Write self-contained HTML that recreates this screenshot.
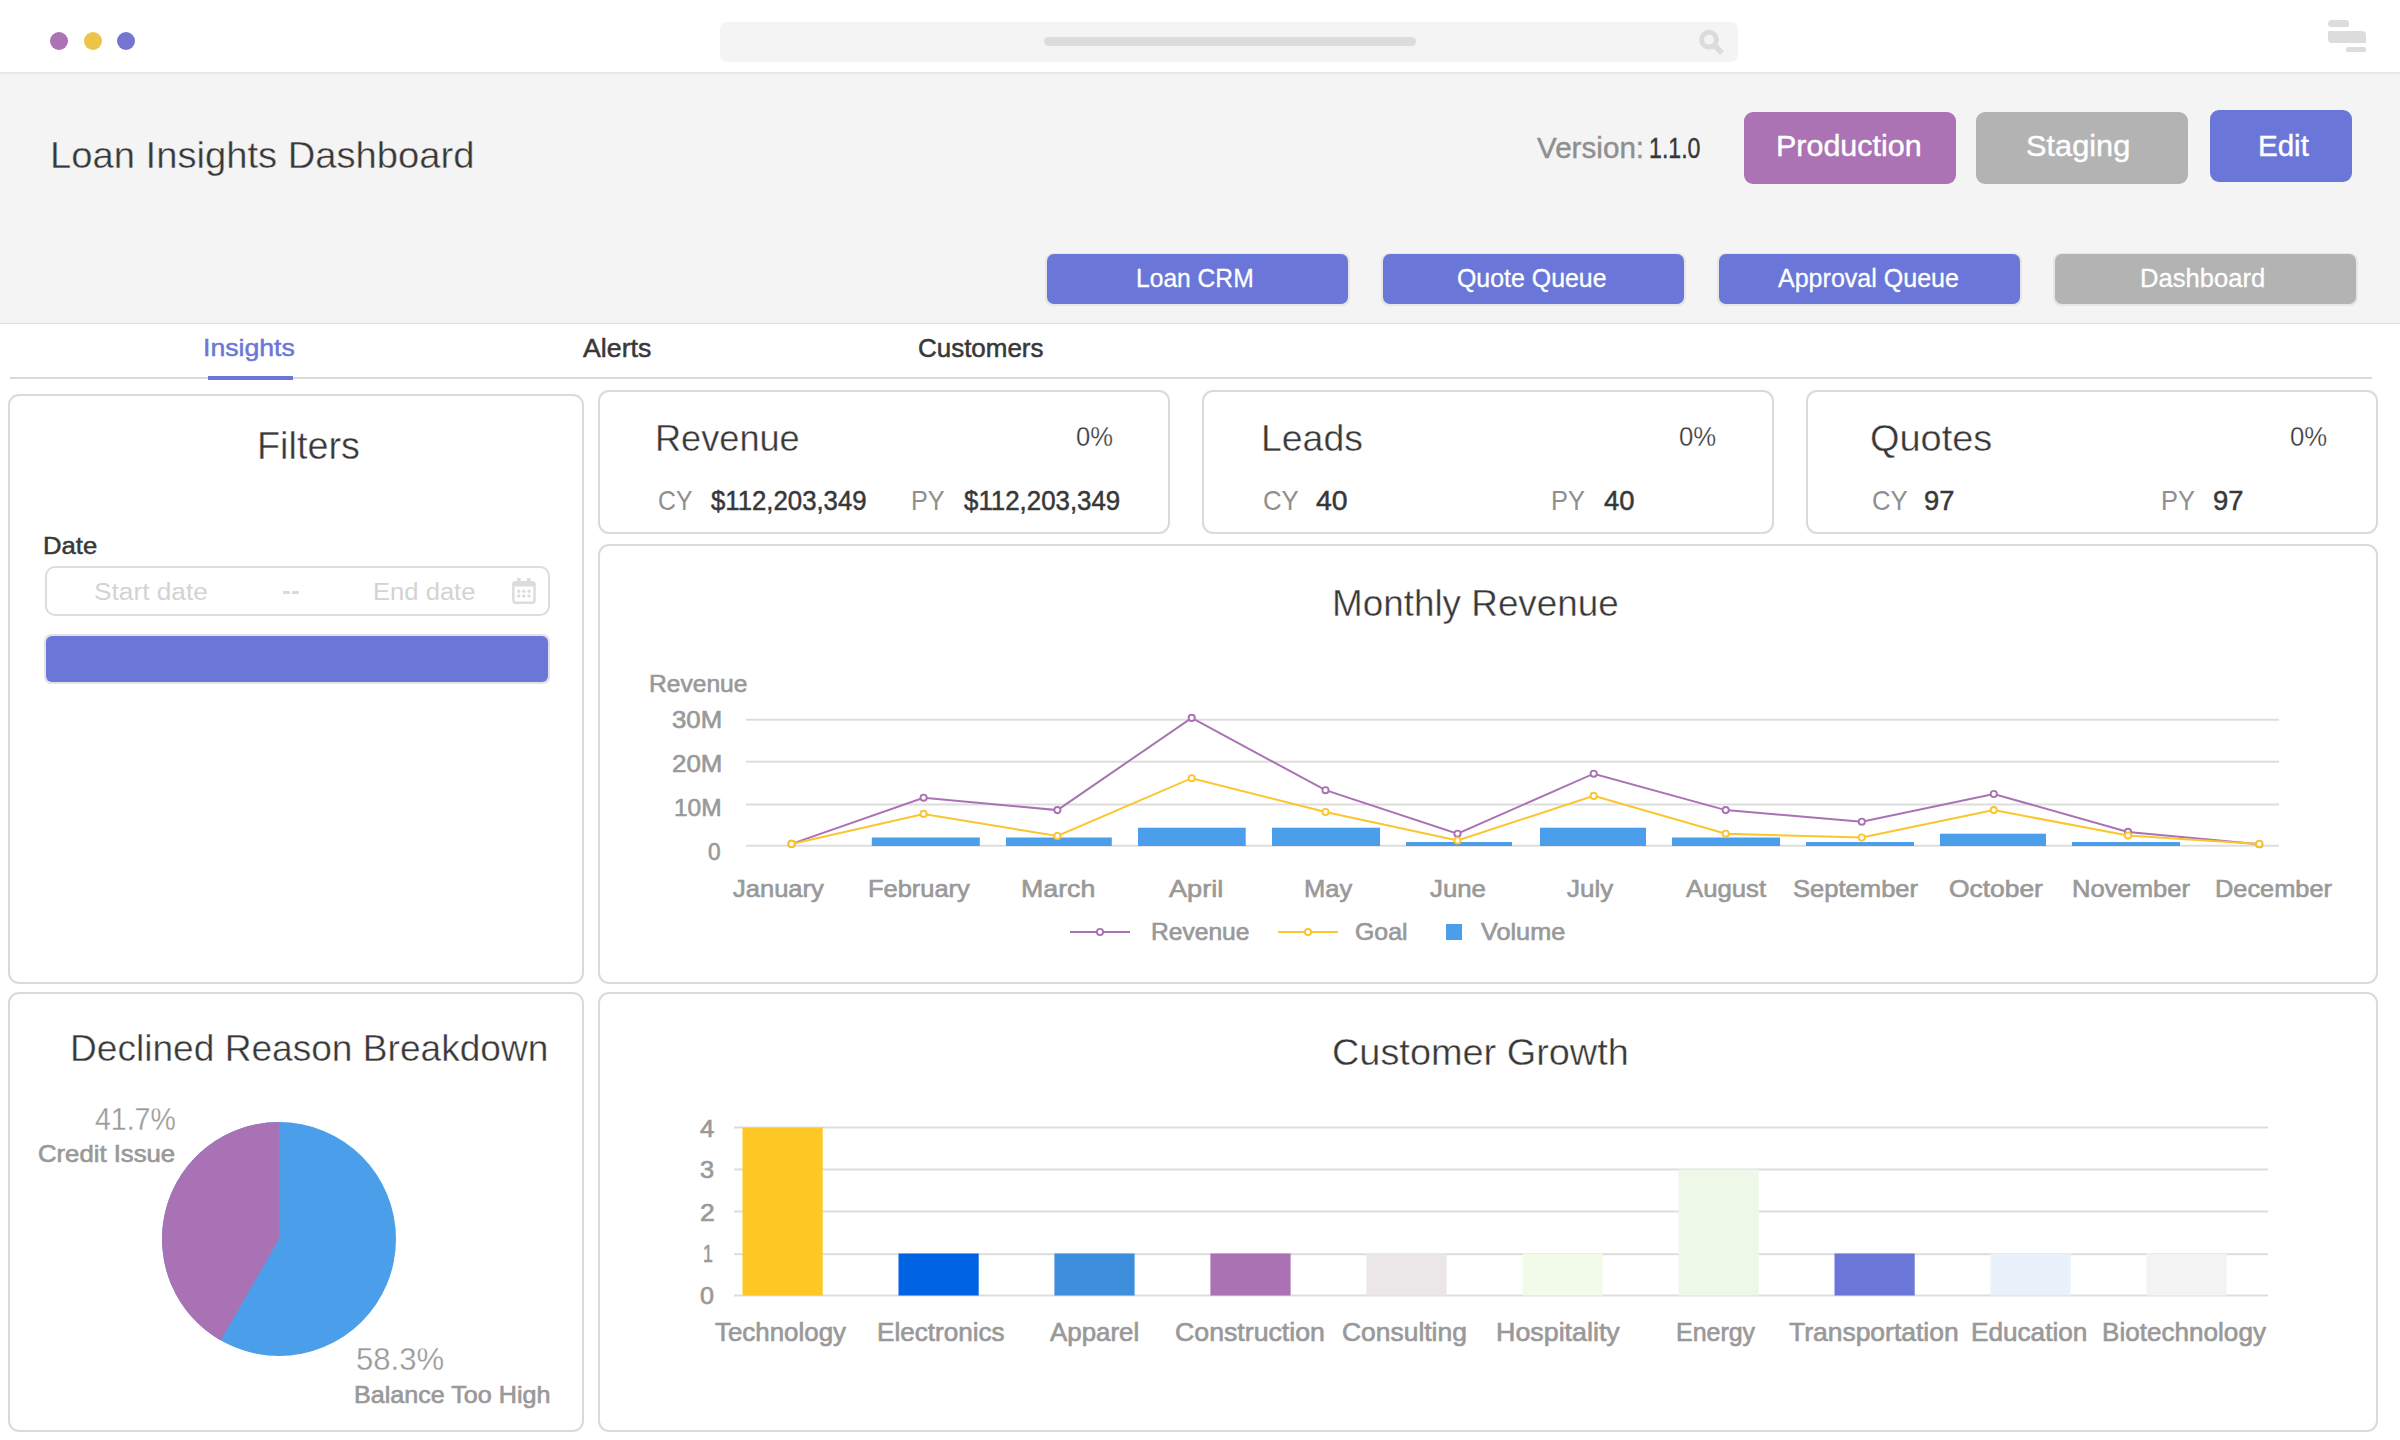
<!DOCTYPE html>
<html><head><meta charset="utf-8"><title>Loan Insights Dashboard</title>
<style>
html,body{margin:0;padding:0;}
body{width:2400px;height:1440px;position:relative;overflow:hidden;background:#fff;font-family:"Liberation Sans",sans-serif;}
.t{position:absolute;white-space:nowrap;line-height:1;transform-origin:0 0;}
</style></head><body>
<div style="position:absolute;left:0px;top:72px;width:2400px;height:2px;box-sizing:border-box;background:#e9e6e7"></div>
<div style="position:absolute;left:50px;top:32px;width:18px;height:18px;box-sizing:border-box;border-radius:50%;background:#ab72b4"></div>
<div style="position:absolute;left:83.5px;top:32px;width:18.0px;height:18px;box-sizing:border-box;border-radius:50%;background:#ecc548"></div>
<div style="position:absolute;left:117px;top:32px;width:18px;height:18px;box-sizing:border-box;border-radius:50%;background:#7576d2"></div>
<div style="position:absolute;left:720px;top:22px;width:1018px;height:40px;box-sizing:border-box;background:#f4f4f4;border-radius:7px"></div>
<div style="position:absolute;left:1044px;top:37px;width:372px;height:9px;box-sizing:border-box;background:#dcdcdc;border-radius:5px"></div>
<svg style="position:absolute;left:0;top:0" width="2400" height="80"><circle cx="1709" cy="39.7" r="7.4" fill="none" stroke="#dcdcdc" stroke-width="5"/><line x1="1714" y1="45" x2="1722" y2="53" stroke="#dcdcdc" stroke-width="5.5"/></svg>
<div style="position:absolute;left:2328px;top:20px;width:21px;height:7px;box-sizing:border-box;background:#dcdcdc;border-radius:3.5px 3.5px 2px 3.5px"></div>
<div style="position:absolute;left:2328px;top:31px;width:38px;height:12px;box-sizing:border-box;background:#dcdcdc;border-radius:1.5px 4px 1.5px 4px"></div>
<div style="position:absolute;left:2346px;top:47px;width:20px;height:5px;box-sizing:border-box;background:#dcdcdc;border-radius:3px"></div>
<div style="position:absolute;left:0px;top:74px;width:2400px;height:249px;box-sizing:border-box;background:#f4f4f4"></div>
<div style="position:absolute;left:0px;top:323px;width:2400px;height:1px;box-sizing:border-box;background:#dedede"></div>
<div class="t" style="left:49.62px;top:137.41px;font-size:37.79px;color:#383838;font-weight:400;transform:scaleX(1.0105);-webkit-text-stroke:0.4px #f4f4f4;paint-order:fill stroke;">Loan Insights Dashboard</div>
<div class="t" style="left:1537.47px;top:133.54px;font-size:28.78px;color:#8f8f8f;font-weight:400;transform:scaleX(1.0304);-webkit-text-stroke:0.4px #8f8f8f;">Version:</div>
<div class="t" style="left:1648.94px;top:133.54px;font-size:28.78px;color:#383838;font-weight:400;transform:scaleX(0.8049);-webkit-text-stroke:0.4px #383838;">1.1.0</div>
<div style="position:absolute;left:1744px;top:112px;width:212px;height:72px;box-sizing:border-box;background:#ab72b4;border-radius:9px"></div>
<div style="position:absolute;left:1976px;top:112px;width:212px;height:72px;box-sizing:border-box;background:#b3b3b3;border-radius:9px"></div>
<div style="position:absolute;left:2210px;top:110px;width:142px;height:72px;box-sizing:border-box;background:#6a77d9;border-radius:9px"></div>
<div class="t" style="left:1775.90px;top:132.44px;font-size:28.78px;color:#fff;font-weight:400;transform:scaleX(1.0592);-webkit-text-stroke:0.4px #fff;">Production</div>
<div class="t" style="left:2025.60px;top:132.44px;font-size:28.78px;color:#fff;font-weight:400;transform:scaleX(1.0684);-webkit-text-stroke:0.4px #fff;">Staging</div>
<div class="t" style="left:2257.98px;top:132.44px;font-size:28.78px;color:#fff;font-weight:400;transform:scaleX(1.0262);-webkit-text-stroke:0.4px #fff;">Edit</div>
<div style="position:absolute;left:1045px;top:252.5px;width:305px;height:53.0px;box-sizing:border-box;background:#e6e6e6;border-radius:8px"></div>
<div style="position:absolute;left:1047px;top:254px;width:301px;height:50px;box-sizing:border-box;background:#6a77d9;border-radius:7px"></div>
<div class="t" style="left:1136.43px;top:265.77px;font-size:25.44px;color:#fff;font-weight:400;transform:scaleX(0.9676);-webkit-text-stroke:0.3px #fff;">Loan CRM</div>
<div style="position:absolute;left:1381px;top:252.5px;width:305px;height:53.0px;box-sizing:border-box;background:#e6e6e6;border-radius:8px"></div>
<div style="position:absolute;left:1383px;top:254px;width:301px;height:50px;box-sizing:border-box;background:#6a77d9;border-radius:7px"></div>
<div class="t" style="left:1456.67px;top:265.77px;font-size:25.44px;color:#fff;font-weight:400;transform:scaleX(0.9790);-webkit-text-stroke:0.3px #fff;">Quote Queue</div>
<div style="position:absolute;left:1717px;top:252.5px;width:305px;height:53.0px;box-sizing:border-box;background:#e6e6e6;border-radius:8px"></div>
<div style="position:absolute;left:1719px;top:254px;width:301px;height:50px;box-sizing:border-box;background:#6a77d9;border-radius:7px"></div>
<div class="t" style="left:1777.60px;top:265.77px;font-size:25.44px;color:#fff;font-weight:400;transform:scaleX(0.9841);-webkit-text-stroke:0.3px #fff;">Approval Queue</div>
<div style="position:absolute;left:2053px;top:252.5px;width:305px;height:53.0px;box-sizing:border-box;background:#e6e6e6;border-radius:8px"></div>
<div style="position:absolute;left:2055px;top:254px;width:301px;height:50px;box-sizing:border-box;background:#b3b3b3;border-radius:7px"></div>
<div class="t" style="left:2140.05px;top:265.77px;font-size:25.44px;color:#fff;font-weight:400;transform:scaleX(1.0056);-webkit-text-stroke:0.3px #fff;">Dashboard</div>
<div class="t" style="left:202.89px;top:335.98px;font-size:24.71px;color:#6a77d9;font-weight:400;transform:scaleX(1.0789);-webkit-text-stroke:0.5px #6a77d9;">Insights</div>
<div class="t" style="left:583.20px;top:335.97px;font-size:25.44px;color:#383838;font-weight:400;transform:scaleX(1.0512);-webkit-text-stroke:0.5px #383838;">Alerts</div>
<div class="t" style="left:917.93px;top:335.97px;font-size:25.44px;color:#383838;font-weight:400;transform:scaleX(1.0201);-webkit-text-stroke:0.5px #383838;">Customers</div>
<div style="position:absolute;left:10px;top:377px;width:2362px;height:2px;box-sizing:border-box;background:#dadada"></div>
<div style="position:absolute;left:208px;top:376px;width:85px;height:4px;box-sizing:border-box;background:#6a77d9"></div>
<div style="position:absolute;left:8px;top:394px;width:576px;height:590px;box-sizing:border-box;border:2px solid #dadada;border-radius:11px;background:#fff"></div>
<div style="position:absolute;left:598px;top:390px;width:572px;height:144px;box-sizing:border-box;border:2px solid #dadada;border-radius:11px;background:#fff"></div>
<div style="position:absolute;left:1202px;top:390px;width:572px;height:144px;box-sizing:border-box;border:2px solid #dadada;border-radius:11px;background:#fff"></div>
<div style="position:absolute;left:1806px;top:390px;width:572px;height:144px;box-sizing:border-box;border:2px solid #dadada;border-radius:11px;background:#fff"></div>
<div style="position:absolute;left:598px;top:544px;width:1780px;height:440px;box-sizing:border-box;border:2px solid #dadada;border-radius:11px;background:#fff"></div>
<div style="position:absolute;left:8px;top:992px;width:576px;height:440px;box-sizing:border-box;border:2px solid #dadada;border-radius:11px;background:#fff"></div>
<div style="position:absolute;left:598px;top:992px;width:1780px;height:440px;box-sizing:border-box;border:2px solid #dadada;border-radius:11px;background:#fff"></div>
<div class="t" style="left:256.90px;top:427.45px;font-size:38.15px;color:#383838;font-weight:400;transform:scaleX(0.9913);-webkit-text-stroke:0.4px #fff;paint-order:fill stroke;">Filters</div>
<div class="t" style="left:43.14px;top:534.75px;font-size:23.62px;color:#383838;font-weight:400;transform:scaleX(1.0878);-webkit-text-stroke:0.5px #383838;">Date</div>
<div style="position:absolute;left:44.5px;top:566px;width:505.0px;height:50px;box-sizing:border-box;border:2px solid #dcdcdc;border-radius:10px"></div>
<div class="t" style="left:93.81px;top:581.00px;font-size:23.62px;color:#d3d3d3;font-weight:400;transform:scaleX(1.1125);">Start date</div>
<div style="position:absolute;left:283px;top:591px;width:6.5px;height:3px;box-sizing:border-box;background:#dadada;border-radius:1px"></div>
<div style="position:absolute;left:292px;top:591px;width:6.5px;height:3px;box-sizing:border-box;background:#dadada;border-radius:1px"></div>
<div class="t" style="left:372.90px;top:581.00px;font-size:23.62px;color:#d3d3d3;font-weight:400;transform:scaleX(1.0840);">End date</div>
<svg style="position:absolute;left:0;top:0" width="600" height="620"><rect x="513.3" y="582.3" width="21.2" height="20.5" rx="2.5" fill="none" stroke="#dcdcdc" stroke-width="2.4"/><rect x="512.5" y="581.5" width="23" height="5" rx="2" fill="#dcdcdc"/><rect x="517" y="578" width="3.6" height="5" fill="#dcdcdc"/><rect x="527" y="578" width="3.6" height="5" fill="#dcdcdc"/><g fill="#dcdcdc"><circle cx="518.7" cy="591.2" r="1.7"/><circle cx="523.8" cy="591.2" r="1.7"/><circle cx="529" cy="591.2" r="1.7"/><circle cx="518.7" cy="596" r="1.7"/><circle cx="523.8" cy="596" r="1.7"/><circle cx="529" cy="596" r="1.7"/></g></svg>
<div style="position:absolute;left:44px;top:634px;width:506px;height:50px;box-sizing:border-box;background:#e3e3e3;border-radius:7px"></div>
<div style="position:absolute;left:46px;top:636px;width:502px;height:46px;box-sizing:border-box;background:#6a77d9;border-radius:6px"></div>
<div class="t" style="left:655.03px;top:419.91px;font-size:37.79px;color:#383838;font-weight:400;transform:scaleX(0.9567);-webkit-text-stroke:0.4px #fff;paint-order:fill stroke;">Revenue</div>
<div class="t" style="left:1075.60px;top:424.26px;font-size:26.74px;color:#383838;font-weight:400;transform:scaleX(0.9574);-webkit-text-stroke:0.3px #fff;paint-order:fill stroke;">0%</div>
<div class="t" style="left:657.74px;top:488.11px;font-size:27.04px;color:#8f8f8f;font-weight:400;transform:scaleX(0.9173);">CY</div>
<div class="t" style="left:710.57px;top:488.11px;font-size:27.04px;color:#383838;font-weight:400;transform:scaleX(0.9524);-webkit-text-stroke:0.5px #383838;">$112,203,349</div>
<div class="t" style="left:910.93px;top:488.11px;font-size:27.04px;color:#8f8f8f;font-weight:400;transform:scaleX(0.9335);">PY</div>
<div class="t" style="left:963.97px;top:488.11px;font-size:27.04px;color:#383838;font-weight:400;transform:scaleX(0.9562);-webkit-text-stroke:0.5px #383838;">$112,203,349</div>
<div class="t" style="left:1260.93px;top:419.91px;font-size:37.79px;color:#383838;font-weight:400;transform:scaleX(0.9899);-webkit-text-stroke:0.4px #fff;paint-order:fill stroke;">Leads</div>
<div class="t" style="left:1679.49px;top:424.26px;font-size:26.74px;color:#383838;font-weight:400;transform:scaleX(0.9628);-webkit-text-stroke:0.3px #fff;paint-order:fill stroke;">0%</div>
<div class="t" style="left:1263.29px;top:488.11px;font-size:27.04px;color:#8f8f8f;font-weight:400;transform:scaleX(0.9510);">CY</div>
<div class="t" style="left:1315.60px;top:488.11px;font-size:27.04px;color:#383838;font-weight:400;transform:scaleX(1.0510);-webkit-text-stroke:0.5px #383838;">40</div>
<div class="t" style="left:1550.92px;top:488.11px;font-size:27.04px;color:#8f8f8f;font-weight:400;transform:scaleX(0.9396);">PY</div>
<div class="t" style="left:1604.02px;top:488.11px;font-size:27.04px;color:#383838;font-weight:400;transform:scaleX(1.0157);-webkit-text-stroke:0.5px #383838;">40</div>
<div class="t" style="left:1869.80px;top:419.91px;font-size:37.79px;color:#383838;font-weight:400;transform:scaleX(1.0037);-webkit-text-stroke:0.4px #fff;paint-order:fill stroke;">Quotes</div>
<div class="t" style="left:2289.59px;top:424.26px;font-size:26.74px;color:#383838;font-weight:400;transform:scaleX(0.9628);-webkit-text-stroke:0.3px #fff;paint-order:fill stroke;">0%</div>
<div class="t" style="left:1871.69px;top:488.11px;font-size:27.04px;color:#8f8f8f;font-weight:400;transform:scaleX(0.9510);">CY</div>
<div class="t" style="left:1923.57px;top:488.11px;font-size:27.04px;color:#383838;font-weight:400;transform:scaleX(1.0108);-webkit-text-stroke:0.5px #383838;">97</div>
<div class="t" style="left:2160.92px;top:488.11px;font-size:27.04px;color:#8f8f8f;font-weight:400;transform:scaleX(0.9396);">PY</div>
<div class="t" style="left:2213.36px;top:488.11px;font-size:27.04px;color:#383838;font-weight:400;transform:scaleX(1.0144);-webkit-text-stroke:0.5px #383838;">97</div>
<div class="t" style="left:1331.78px;top:585.87px;font-size:36.77px;color:#383838;font-weight:400;transform:scaleX(1.0023);-webkit-text-stroke:0.4px #fff;paint-order:fill stroke;">Monthly Revenue</div>
<div class="t" style="left:649.41px;top:672.08px;font-size:24.71px;color:#999999;font-weight:400;transform:scaleX(0.9954);-webkit-text-stroke:0.65px #999999;">Revenue</div>
<div class="t" style="left:672.09px;top:708.08px;font-size:24.71px;color:#999999;font-weight:400;transform:scaleX(1.0426);-webkit-text-stroke:0.65px #999999;">30M</div>
<div class="t" style="left:671.82px;top:752.08px;font-size:24.71px;color:#999999;font-weight:400;transform:scaleX(1.0485);-webkit-text-stroke:0.65px #999999;">20M</div>
<div class="t" style="left:674.46px;top:796.08px;font-size:24.71px;color:#999999;font-weight:400;transform:scaleX(0.9913);-webkit-text-stroke:0.65px #999999;">10M</div>
<div class="t" style="left:708.44px;top:839.58px;font-size:24.71px;color:#999999;font-weight:400;transform:scaleX(0.9169);-webkit-text-stroke:0.65px #999999;">0</div>
<svg style="position:absolute;left:0;top:0" width="2400" height="1440">
<rect x="746" y="718.7" width="1533" height="2" fill="#dddddd"/>
<rect x="746" y="760.7" width="1533" height="2" fill="#dddddd"/>
<rect x="746" y="803.5" width="1533" height="2" fill="#dddddd"/>
<rect x="746" y="844.7" width="1533" height="2" fill="#dddddd"/>
<rect x="871.8" y="837.5" width="108.0" height="8.5" fill="#4a9eea"/>
<rect x="1006" y="837.5" width="105.8" height="8.5" fill="#4a9eea"/>
<rect x="1138" y="827.7" width="107.7" height="18.3" fill="#4a9eea"/>
<rect x="1272" y="827.7" width="108.0" height="18.3" fill="#4a9eea"/>
<rect x="1406" y="842" width="106.0" height="4.0" fill="#4a9eea"/>
<rect x="1540" y="827.7" width="106.0" height="18.3" fill="#4a9eea"/>
<rect x="1672" y="837.5" width="108.0" height="8.5" fill="#4a9eea"/>
<rect x="1806" y="842" width="108.0" height="4.0" fill="#4a9eea"/>
<rect x="1940" y="833.7" width="106.0" height="12.3" fill="#4a9eea"/>
<rect x="2072" y="842" width="108.0" height="4.0" fill="#4a9eea"/>
<polyline points="791.6,843.9 923.6,797.7 1057.4,810.1 1191.7,717.9 1325.5,790.2 1457.5,833.7 1593.7,773.7 1725.7,810.1 1861.8,821.7 1993.8,794.0 2128.0,831.9 2259.3,844.2" fill="none" stroke="#a972b4" stroke-width="2"/>
<circle cx="791.6" cy="843.9" r="3.1" fill="#fff" stroke="#a972b4" stroke-width="1.9"/>
<circle cx="923.6" cy="797.7" r="3.1" fill="#fff" stroke="#a972b4" stroke-width="1.9"/>
<circle cx="1057.4" cy="810.1" r="3.1" fill="#fff" stroke="#a972b4" stroke-width="1.9"/>
<circle cx="1191.7" cy="717.9" r="3.1" fill="#fff" stroke="#a972b4" stroke-width="1.9"/>
<circle cx="1325.5" cy="790.2" r="3.1" fill="#fff" stroke="#a972b4" stroke-width="1.9"/>
<circle cx="1457.5" cy="833.7" r="3.1" fill="#fff" stroke="#a972b4" stroke-width="1.9"/>
<circle cx="1593.7" cy="773.7" r="3.1" fill="#fff" stroke="#a972b4" stroke-width="1.9"/>
<circle cx="1725.7" cy="810.1" r="3.1" fill="#fff" stroke="#a972b4" stroke-width="1.9"/>
<circle cx="1861.8" cy="821.7" r="3.1" fill="#fff" stroke="#a972b4" stroke-width="1.9"/>
<circle cx="1993.8" cy="794.0" r="3.1" fill="#fff" stroke="#a972b4" stroke-width="1.9"/>
<circle cx="2128.0" cy="831.9" r="3.1" fill="#fff" stroke="#a972b4" stroke-width="1.9"/>
<circle cx="2259.3" cy="844.2" r="3.1" fill="#fff" stroke="#a972b4" stroke-width="1.9"/>
<polyline points="791.6,843.9 923.6,813.9 1057.4,836.0 1191.7,778.2 1325.5,812.0 1457.5,840.5 1593.7,795.9 1725.7,833.7 1861.8,837.5 1993.8,810.1 2128.0,835.6 2259.3,843.9" fill="none" stroke="#fbc52b" stroke-width="2"/>
<circle cx="791.6" cy="843.9" r="3.1" fill="#fff" stroke="#fbc52b" stroke-width="1.9"/>
<circle cx="923.6" cy="813.9" r="3.1" fill="#fff" stroke="#fbc52b" stroke-width="1.9"/>
<circle cx="1057.4" cy="836.0" r="3.1" fill="#fff" stroke="#fbc52b" stroke-width="1.9"/>
<circle cx="1191.7" cy="778.2" r="3.1" fill="#fff" stroke="#fbc52b" stroke-width="1.9"/>
<circle cx="1325.5" cy="812.0" r="3.1" fill="#fff" stroke="#fbc52b" stroke-width="1.9"/>
<circle cx="1457.5" cy="840.5" r="3.1" fill="#fff" stroke="#fbc52b" stroke-width="1.9"/>
<circle cx="1593.7" cy="795.9" r="3.1" fill="#fff" stroke="#fbc52b" stroke-width="1.9"/>
<circle cx="1725.7" cy="833.7" r="3.1" fill="#fff" stroke="#fbc52b" stroke-width="1.9"/>
<circle cx="1861.8" cy="837.5" r="3.1" fill="#fff" stroke="#fbc52b" stroke-width="1.9"/>
<circle cx="1993.8" cy="810.1" r="3.1" fill="#fff" stroke="#fbc52b" stroke-width="1.9"/>
<circle cx="2128.0" cy="835.6" r="3.1" fill="#fff" stroke="#fbc52b" stroke-width="1.9"/>
<circle cx="2259.3" cy="843.9" r="3.1" fill="#fff" stroke="#fbc52b" stroke-width="1.9"/>
<line x1="1070" y1="932" x2="1130" y2="932" stroke="#a972b4" stroke-width="2"/><circle cx="1100" cy="932" r="3.1" fill="#fff" stroke="#a972b4" stroke-width="1.9"/>
<line x1="1278" y1="932" x2="1338" y2="932" stroke="#fbc52b" stroke-width="2"/><circle cx="1308" cy="932" r="3.1" fill="#fff" stroke="#fbc52b" stroke-width="1.9"/>
<rect x="1446" y="924" width="16" height="16" fill="#4a9eea"/>
<circle cx="279" cy="1239" r="117" fill="#4a9eea"/>
<path d="M279,1239 L279,1122 A117,117 0 0 0 220.71,1340.45 Z" fill="#a972b4"/>
<rect x="734" y="1126.5" width="1534" height="2" fill="#dddddd"/>
<rect x="734" y="1168.5" width="1534" height="2" fill="#dddddd"/>
<rect x="734" y="1210.5" width="1534" height="2" fill="#dddddd"/>
<rect x="734" y="1253.2" width="1534" height="2" fill="#dddddd"/>
<rect x="734" y="1294.5" width="1534" height="2" fill="#dddddd"/>
<rect x="742.5" y="1127.5" width="80.2" height="168.0" fill="#fdc823"/>
<rect x="898.5" y="1253.5" width="80.2" height="42.0" fill="#0063e3"/>
<rect x="1054.4" y="1253.5" width="80.2" height="42.0" fill="#3d8fdb"/>
<rect x="1210.4" y="1253.5" width="80.2" height="42.0" fill="#aa72b3"/>
<rect x="1366.4" y="1253.5" width="80.2" height="42.0" fill="#ebe7e8"/>
<rect x="1522.5" y="1253.5" width="80.2" height="42.0" fill="#f1fbe8"/>
<rect x="1678.5" y="1169.5" width="80.2" height="126.0" fill="#eef8e8"/>
<rect x="1834.5" y="1253.5" width="80.2" height="42.0" fill="#6a77d9"/>
<rect x="1990.5" y="1253.5" width="80.2" height="42.0" fill="#e9f2fb"/>
<rect x="2146.4" y="1253.5" width="80.2" height="42.0" fill="#f3f3f3"/>
</svg>
<div class="t" style="left:732.93px;top:876.78px;font-size:24.71px;color:#999999;font-weight:400;transform:scaleX(1.0335);-webkit-text-stroke:0.65px #999999;">January</div>
<div class="t" style="left:868.24px;top:876.78px;font-size:24.71px;color:#999999;font-weight:400;transform:scaleX(1.0298);-webkit-text-stroke:0.65px #999999;">February</div>
<div class="t" style="left:1021.13px;top:876.78px;font-size:24.71px;color:#999999;font-weight:400;transform:scaleX(1.0832);-webkit-text-stroke:0.65px #999999;">March</div>
<div class="t" style="left:1169.47px;top:876.78px;font-size:24.71px;color:#999999;font-weight:400;transform:scaleX(1.0991);-webkit-text-stroke:0.65px #999999;">April</div>
<div class="t" style="left:1303.93px;top:876.78px;font-size:24.71px;color:#999999;font-weight:400;transform:scaleX(1.0329);-webkit-text-stroke:0.65px #999999;">May</div>
<div class="t" style="left:1429.72px;top:876.78px;font-size:24.71px;color:#999999;font-weight:400;transform:scaleX(1.0434);-webkit-text-stroke:0.65px #999999;">June</div>
<div class="t" style="left:1566.62px;top:876.78px;font-size:24.71px;color:#999999;font-weight:400;transform:scaleX(1.0521);-webkit-text-stroke:0.65px #999999;">July</div>
<div class="t" style="left:1685.87px;top:876.78px;font-size:24.71px;color:#999999;font-weight:400;transform:scaleX(1.0407);-webkit-text-stroke:0.65px #999999;">August</div>
<div class="t" style="left:1792.76px;top:876.78px;font-size:24.71px;color:#999999;font-weight:400;transform:scaleX(1.0353);-webkit-text-stroke:0.65px #999999;">September</div>
<div class="t" style="left:1949.07px;top:876.78px;font-size:24.71px;color:#999999;font-weight:400;transform:scaleX(1.0682);-webkit-text-stroke:0.65px #999999;">October</div>
<div class="t" style="left:2071.93px;top:876.78px;font-size:24.71px;color:#999999;font-weight:400;transform:scaleX(1.0351);-webkit-text-stroke:0.65px #999999;">November</div>
<div class="t" style="left:2215.24px;top:876.78px;font-size:24.71px;color:#999999;font-weight:400;transform:scaleX(1.0271);-webkit-text-stroke:0.65px #999999;">December</div>
<div class="t" style="left:1150.61px;top:920.99px;font-size:23.40px;color:#999999;font-weight:400;transform:scaleX(1.0509);-webkit-text-stroke:0.65px #999999;">Revenue</div>
<div class="t" style="left:1354.57px;top:920.99px;font-size:23.40px;color:#999999;font-weight:400;transform:scaleX(1.0629);-webkit-text-stroke:0.65px #999999;">Goal</div>
<div class="t" style="left:1481.21px;top:920.99px;font-size:23.40px;color:#999999;font-weight:400;transform:scaleX(1.0791);-webkit-text-stroke:0.65px #999999;">Volume</div>
<div class="t" style="left:70.36px;top:1030.54px;font-size:36.34px;color:#383838;font-weight:400;transform:scaleX(1.0211);-webkit-text-stroke:0.4px #fff;paint-order:fill stroke;">Declined Reason Breakdown</div>
<div class="t" style="left:94.65px;top:1102.93px;font-size:31.98px;color:#999;font-weight:400;transform:scaleX(0.8902);-webkit-text-stroke:0.3px #fff;paint-order:fill stroke;">41.7%</div>
<div class="t" style="left:38.02px;top:1142.47px;font-size:24.13px;color:#999999;font-weight:400;transform:scaleX(1.0650);-webkit-text-stroke:0.65px #999999;">Credit Issue</div>
<div class="t" style="left:355.75px;top:1343.86px;font-size:30.52px;color:#999;font-weight:400;transform:scaleX(1.0194);-webkit-text-stroke:0.3px #fff;paint-order:fill stroke;">58.3%</div>
<div class="t" style="left:353.86px;top:1383.07px;font-size:24.13px;color:#999999;font-weight:400;transform:scaleX(1.0412);-webkit-text-stroke:0.65px #999999;">Balance Too High</div>
<div class="t" style="left:1331.83px;top:1035.24px;font-size:36.34px;color:#383838;font-weight:400;transform:scaleX(1.0426);-webkit-text-stroke:0.4px #fff;paint-order:fill stroke;">Customer Growth</div>
<div class="t" style="left:699.74px;top:1117.10px;font-size:23.98px;color:#999999;font-weight:400;transform:scaleX(1.0707);-webkit-text-stroke:0.65px #999999;">4</div>
<div class="t" style="left:699.86px;top:1157.70px;font-size:23.98px;color:#999999;font-weight:400;transform:scaleX(1.0588);-webkit-text-stroke:0.65px #999999;">3</div>
<div class="t" style="left:699.50px;top:1201.10px;font-size:23.98px;color:#999999;font-weight:400;transform:scaleX(1.1019);-webkit-text-stroke:0.65px #999999;">2</div>
<div class="t" style="left:702.87px;top:1241.70px;font-size:23.98px;color:#999999;font-weight:400;transform:scaleX(0.7391);-webkit-text-stroke:0.65px #999999;">1</div>
<div class="t" style="left:699.84px;top:1284.45px;font-size:23.98px;color:#999999;font-weight:400;transform:scaleX(1.0501);-webkit-text-stroke:0.65px #999999;">0</div>
<div class="t" style="left:714.84px;top:1320.21px;font-size:25.15px;color:#999999;font-weight:400;transform:scaleX(1.0301);-webkit-text-stroke:0.65px #999999;">Technology</div>
<div class="t" style="left:877.48px;top:1320.21px;font-size:25.15px;color:#999999;font-weight:400;transform:scaleX(1.0376);-webkit-text-stroke:0.65px #999999;">Electronics</div>
<div class="t" style="left:1050.27px;top:1320.21px;font-size:25.15px;color:#999999;font-weight:400;transform:scaleX(1.0288);-webkit-text-stroke:0.65px #999999;">Apparel</div>
<div class="t" style="left:1174.57px;top:1320.21px;font-size:25.15px;color:#999999;font-weight:400;transform:scaleX(1.0621);-webkit-text-stroke:0.65px #999999;">Construction</div>
<div class="t" style="left:1342.18px;top:1320.21px;font-size:25.15px;color:#999999;font-weight:400;transform:scaleX(1.0511);-webkit-text-stroke:0.65px #999999;">Consulting</div>
<div class="t" style="left:1496.12px;top:1320.21px;font-size:25.15px;color:#999999;font-weight:400;transform:scaleX(1.0673);-webkit-text-stroke:0.65px #999999;">Hospitality</div>
<div class="t" style="left:1676.28px;top:1320.21px;font-size:25.15px;color:#999999;font-weight:400;transform:scaleX(0.9931);-webkit-text-stroke:0.65px #999999;">Energy</div>
<div class="t" style="left:1789.23px;top:1320.21px;font-size:25.15px;color:#999999;font-weight:400;transform:scaleX(1.0525);-webkit-text-stroke:0.65px #999999;">Transportation</div>
<div class="t" style="left:1971.38px;top:1320.21px;font-size:25.15px;color:#999999;font-weight:400;transform:scaleX(1.0400);-webkit-text-stroke:0.65px #999999;">Education</div>
<div class="t" style="left:2101.88px;top:1320.21px;font-size:25.15px;color:#999999;font-weight:400;transform:scaleX(1.0380);-webkit-text-stroke:0.65px #999999;">Biotechnology</div>
</body></html>
